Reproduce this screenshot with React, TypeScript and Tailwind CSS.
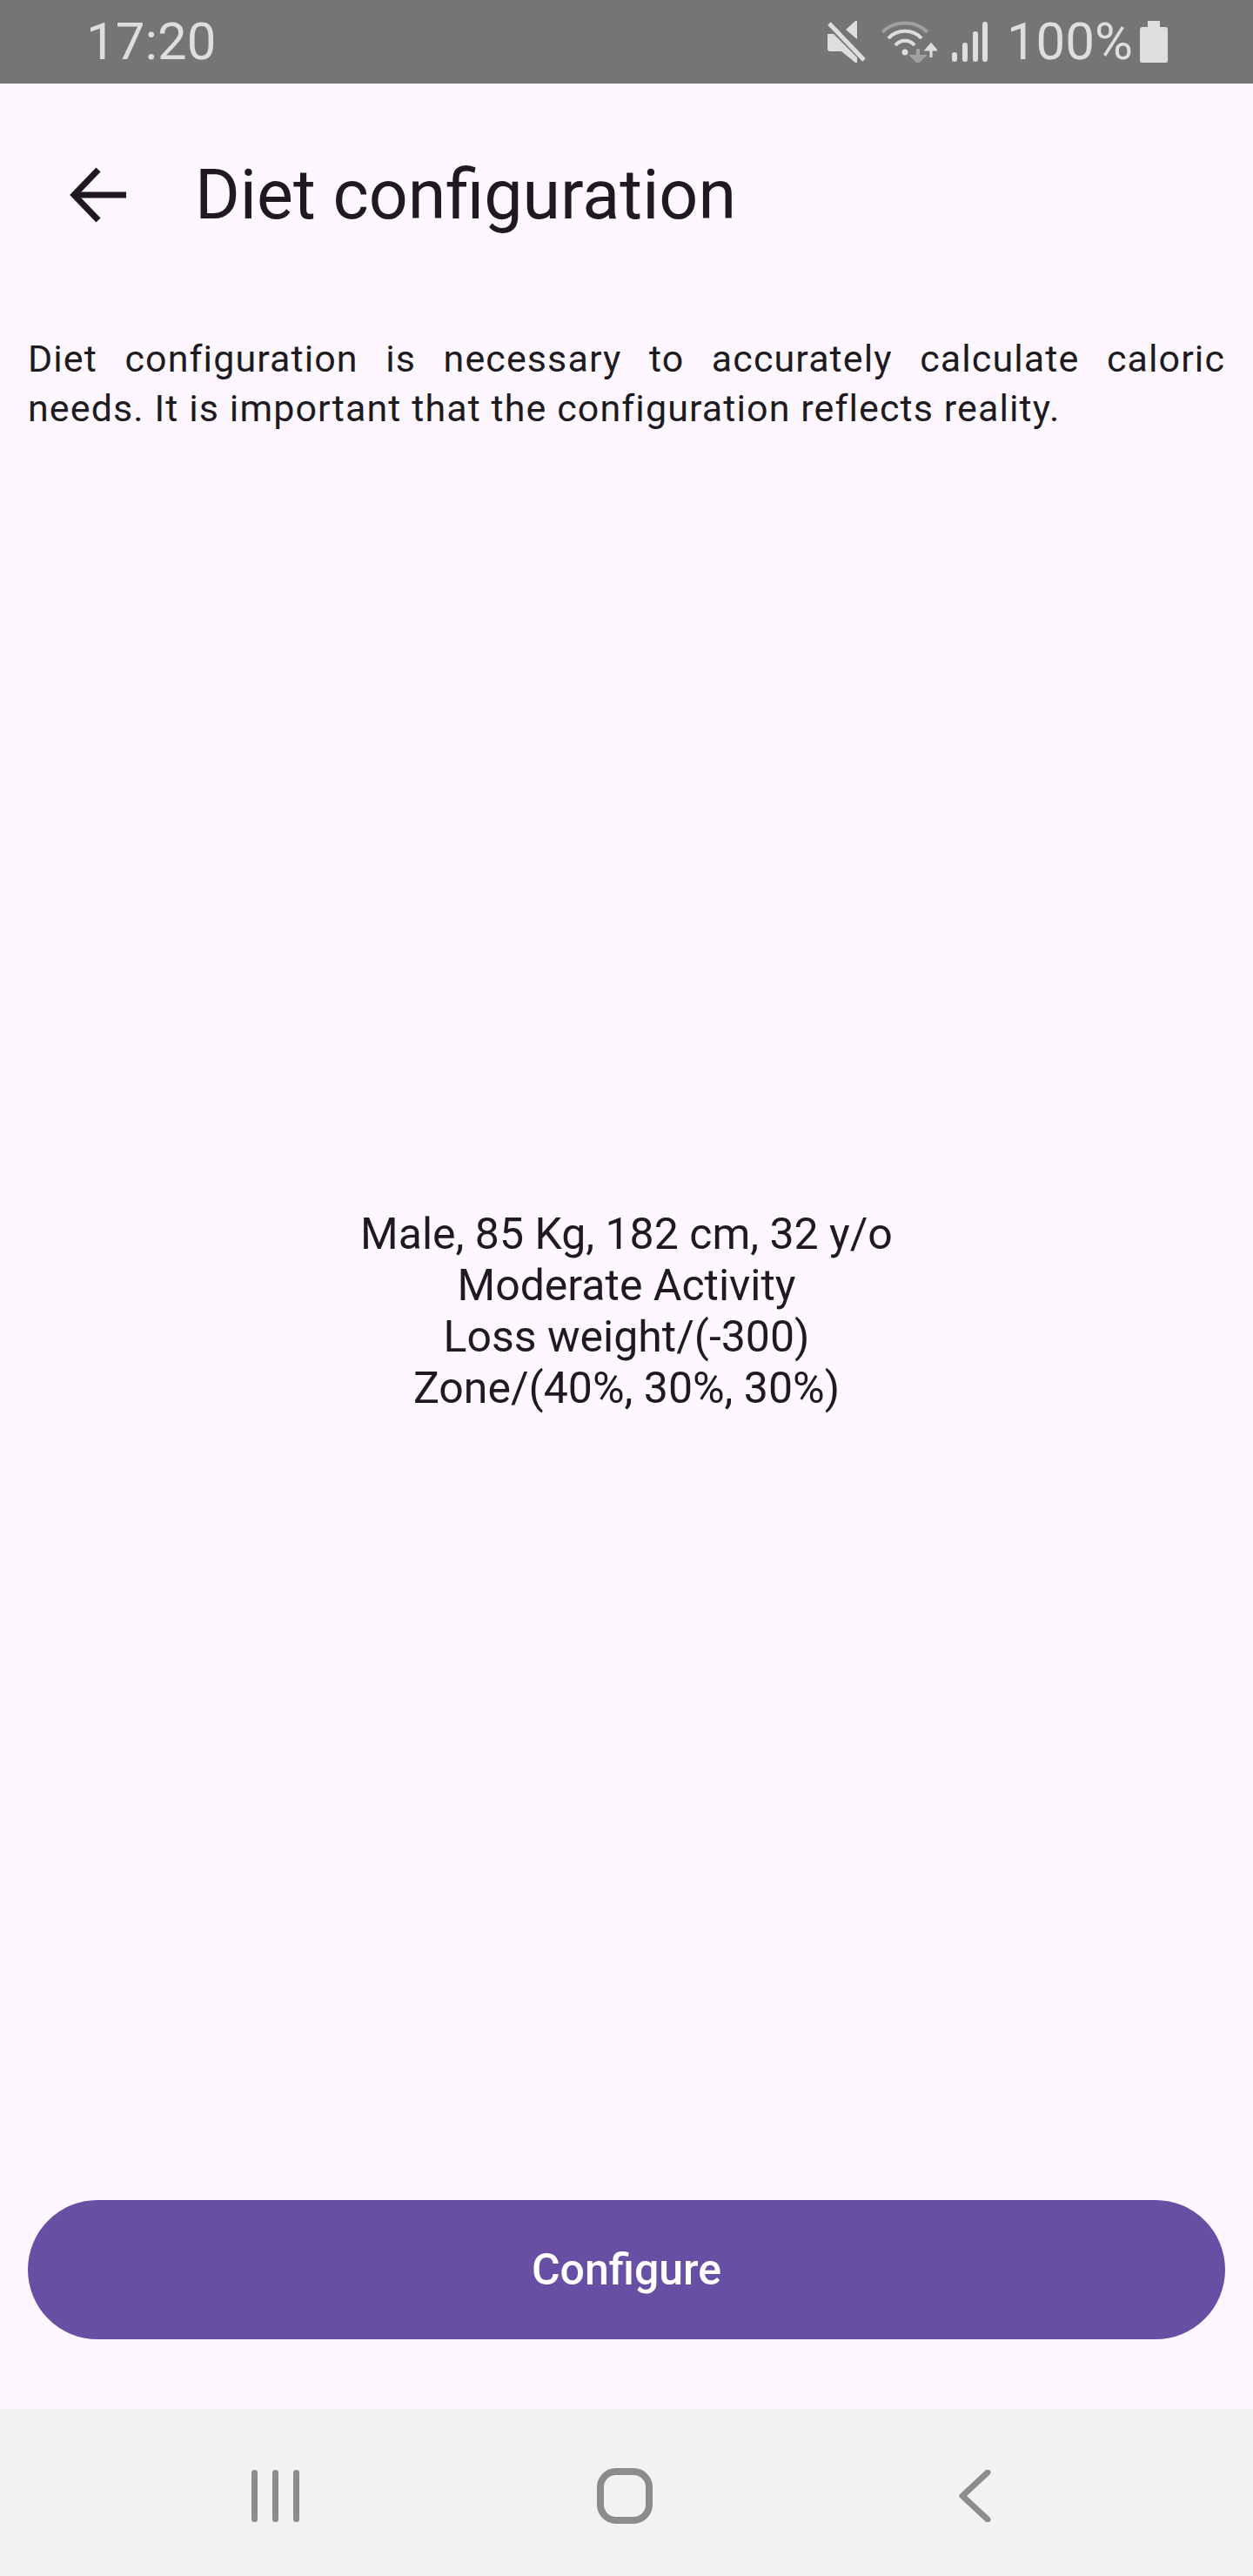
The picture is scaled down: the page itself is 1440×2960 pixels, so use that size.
const roboto = "font-['Roboto',sans-serif]";

function MuteIcon() {
  return (
    <svg width="44" height="48" viewBox="0 0 44 48" className="text-[#dedede]">
      <path d="M0 15h7l27 27v5a1 1 0 0 1-2 1L16 35H3a3 3 0 0 1-3-3z" fill="currentColor" />
      <path d="M21 10L32 0h2v21z" fill="currentColor" />
      <path d="M2 3l40 42" stroke="currentColor" strokeWidth="5" fill="none" />
    </svg>
  );
}

function WifiIcon() {
  return (
    <svg width="64" height="48" viewBox="0 0 64 48" fill="none" stroke="currentColor" className="text-[#dedede]">
      <path d="M1 13C15 -1 39 -1 53 13" strokeWidth="4" stroke="#a0a0a0" />
      <path d="M8 20C18 9 36 9 46 20" strokeWidth="4" />
      <path d="M16 28C22 21 32 21 38 28" strokeWidth="4" />
      <circle cx="27" cy="36" r="3.5" fill="currentColor" stroke="none" />
      <path d="M42 32v12M36 41l6 6 6-6z" stroke="#a0a0a0" strokeWidth="4" fill="#a0a0a0" />
      <path d="M57 42V29M52 33l5-6 5 6z" strokeWidth="3" fill="currentColor" />
    </svg>
  );
}

function SignalIcon() {
  return (
    <svg width="41" height="46" viewBox="0 0 41 46" fill="#dedede">
      <rect x="0" y="35" width="6" height="11" rx="3" />
      <rect x="12" y="24" width="6" height="22" rx="3" />
      <rect x="24" y="11" width="6" height="35" rx="3" />
      <rect x="35" y="0" width="6" height="46" rx="3" />
    </svg>
  );
}

function BatteryIcon() {
  return (
    <svg width="32" height="48" viewBox="0 0 32 48" fill="#dedede">
      <path d="M9 0h14v7h6a3 3 0 0 1 3 3v36a2 2 0 0 1-2 2H2a2 2 0 0 1-2-2V10a3 3 0 0 1 3-3h6z" />
    </svg>
  );
}

function BackArrow() {
  return (
    <svg width="65" height="64" viewBox="0 0 65 64" fill="none" stroke="#1d1b20" strokeWidth="7">
      <path d="M65 32H5" />
      <path d="M33 3L5 32l28 29" />
    </svg>
  );
}

function NavBars() {
  return (
    <svg width="55" height="60" viewBox="0 0 55 60" fill="#8c8c8c">
      <rect x="0" y="0" width="7" height="60" rx="3.5" />
      <rect x="24" y="0" width="7" height="60" rx="3.5" />
      <rect x="48" y="0" width="7" height="60" rx="3.5" />
    </svg>
  );
}

function NavHome() {
  return (
    <svg width="64" height="64" viewBox="0 0 64 64" fill="none" stroke="#8c8c8c" strokeWidth="8">
      <rect x="4" y="4" width="56" height="56" rx="18" />
    </svg>
  );
}

function NavBack() {
  return (
    <svg width="37" height="60" viewBox="0 0 37 60" fill="none" stroke="#8c8c8c" strokeWidth="7" strokeLinecap="round" strokeLinejoin="round">
      <path d="M33 3L4 30l29 27" />
    </svg>
  );
}

export default function App() {
  return (
    <div className={`flex h-[2960px] w-[1440px] flex-col bg-[#fef7ff] text-[#1d1b20] ${roboto}`}>
      <div className="flex h-[96px] items-center justify-between bg-[#757575] pl-[99px] pr-[98px] text-[#dedede]">
        <span className="text-[60px] leading-none">17:20</span>
        <div className="flex items-center">
          <MuteIcon />
          <div className="ml-[18px]"><WifiIcon /></div>
          <div className="ml-[17px]"><SignalIcon /></div>
          <span className="ml-[22px] text-[60px] leading-none">100%</span>
          <div className="ml-[8px]"><BatteryIcon /></div>
        </div>
      </div>

      <div className="mt-[64px] flex h-[128px] items-center pl-[80px]">
        <BackArrow />
        <h1 className="ml-[79px] text-[79px] font-normal leading-none">Diet configuration</h1>
      </div>

      <p className="mt-[96px] px-[32px] text-justify text-[43px] leading-[57px] tracking-[1.1px]">
        Diet configuration is necessary to accurately calculate caloric needs. It is important that the configuration reflects reality.
      </p>

      <div className="flex flex-1 flex-col items-center justify-center pb-[12px] text-center text-[50px] leading-[59px]">
        <div>Male, 85 Kg, 182 cm, 32 y/o</div>
        <div>Moderate Activity</div>
        <div>Loss weight/(-300)</div>
        <div>Zone/(40%, 30%, 30%)</div>
      </div>

      <div className="px-[32px] pb-[80px]">
        <button className="flex h-[160px] w-full items-center justify-center rounded-full bg-[#6750a4] text-[50px] font-medium text-white">
          Configure
        </button>
      </div>

      <div className="flex h-[192px] items-center bg-[#f2f2f2] pl-[289px] pt-[8px]">
        <NavBars />
        <div className="ml-[342px]"><NavHome /></div>
        <div className="ml-[352px]"><NavBack /></div>
      </div>
    </div>
  );
}
